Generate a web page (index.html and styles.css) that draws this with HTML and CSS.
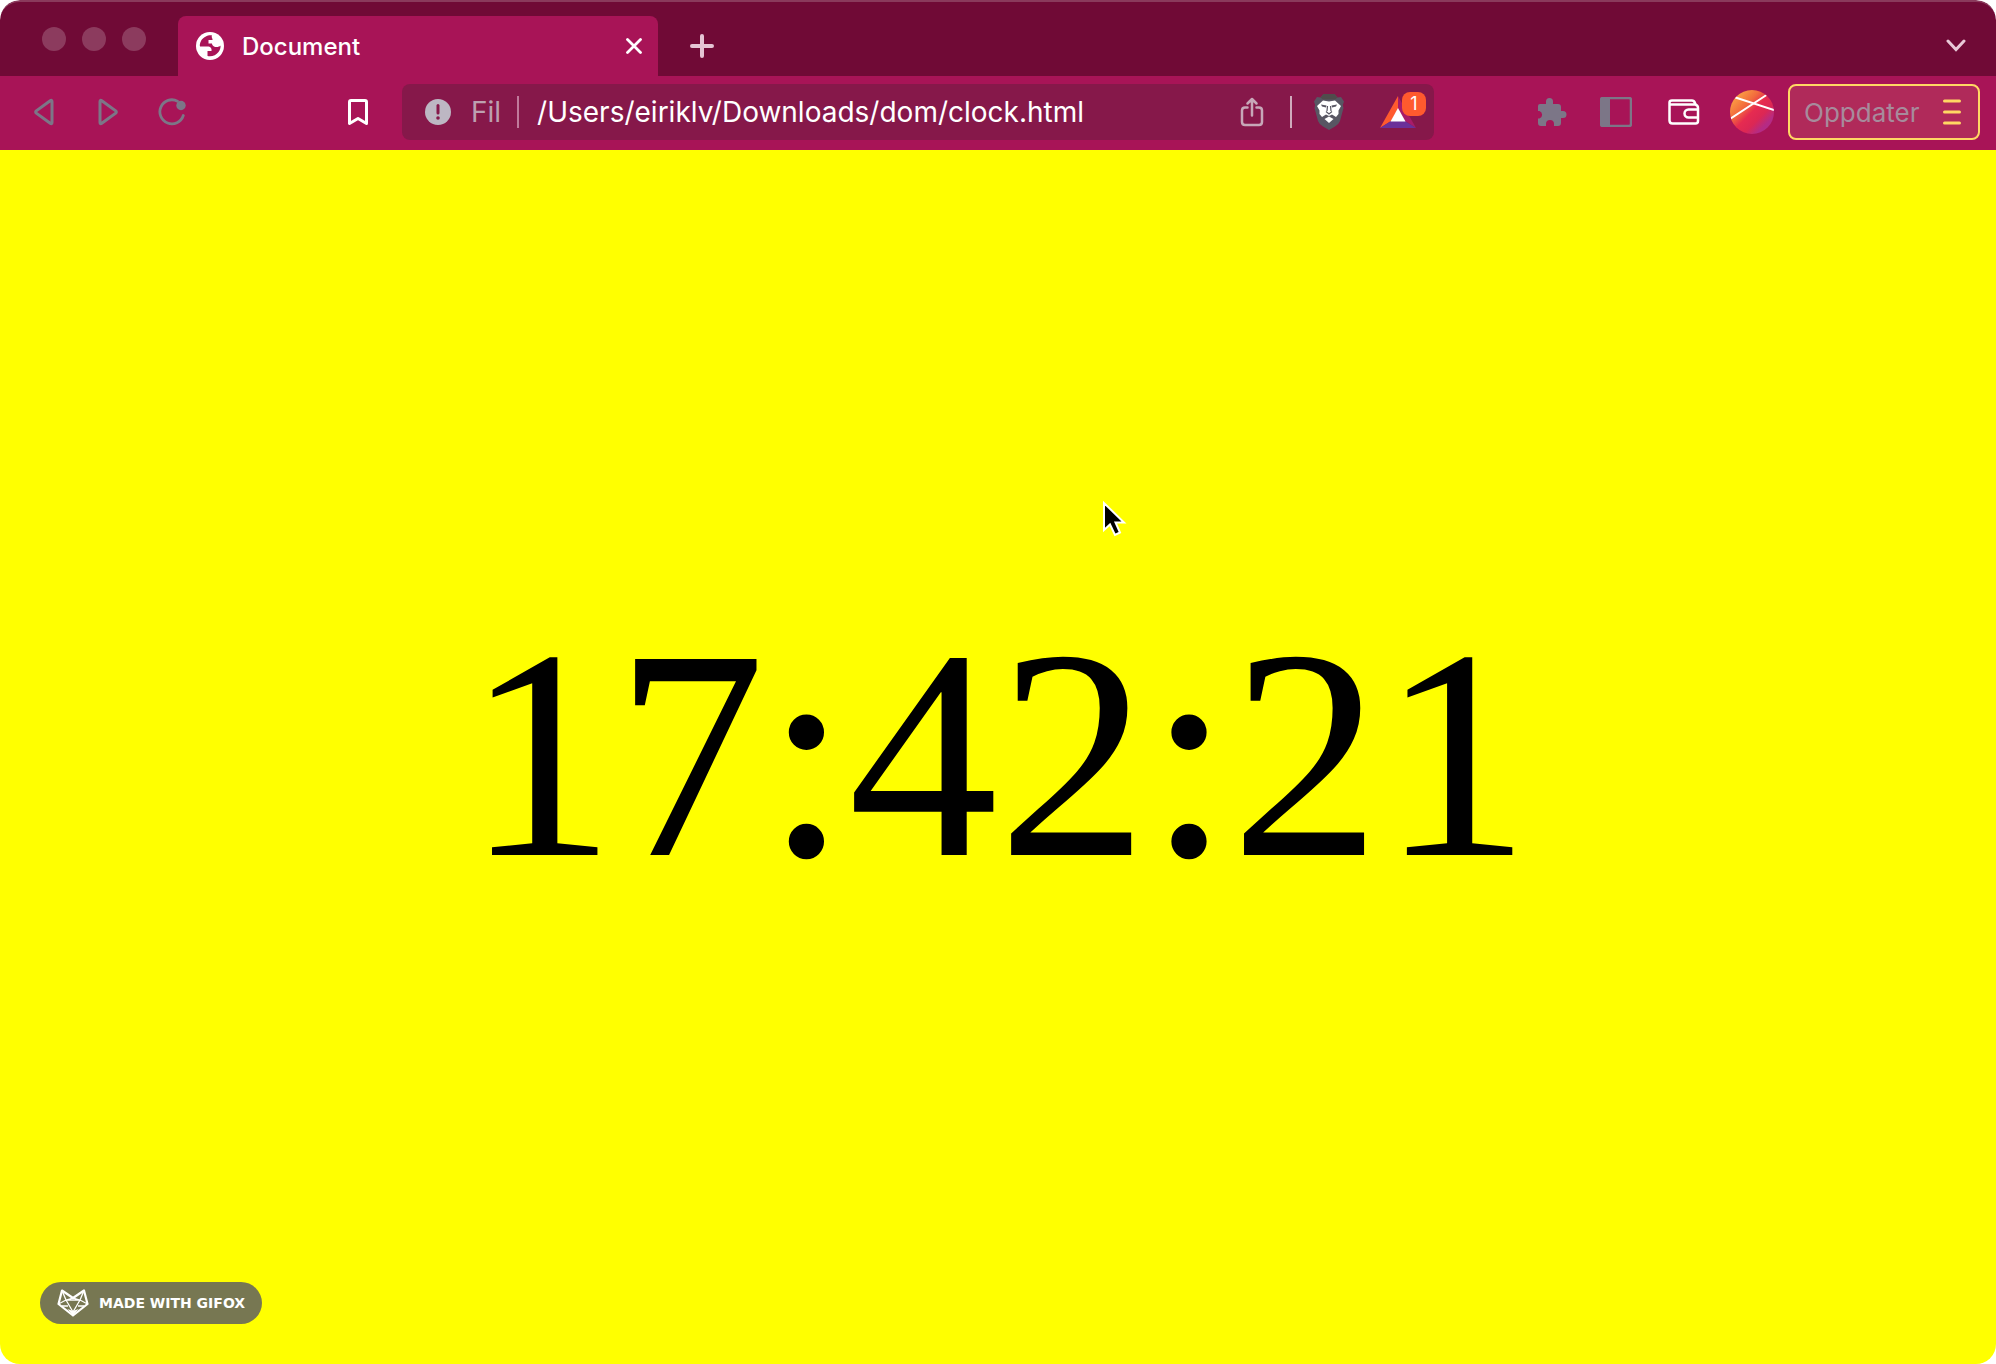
FILE: index.html
```html
<!DOCTYPE html>
<html lang="no">
<head>
<meta charset="utf-8">
<meta name="viewport" content="width=device-width, initial-scale=1">
<title>Document</title>
<link rel="stylesheet" href="styles.css">
</head>
<body>
<div class="window">
  <header class="titlebar">
    <div class="lights"><span class="light"></span><span class="light"></span><span class="light"></span></div>
    <div class="tab">
      <svg class="favicon" width="28" height="28" viewBox="0 0 28 28" aria-hidden="true">
        <circle cx="14" cy="14" r="14" fill="#fff"/>
        <path d="M16 3.500C13 2.800 7.500 4.500 5 9C4 11 3.500 13 4 14.500H11.500C14.500 14.500 16 16.500 15.500 19H11.500V24C15.500 25 20 23.500 22.500 20C24 18 24.800 15.500 24.500 13.500C23.500 15 20 15.500 18 14.500C16.500 13.500 16 12.500 16 11.500H12.500V8H16.500C17 6.500 15 5.500 16 3.500Z" fill="#a81457"/>
      </svg>
      <span class="tab-title">Document</span>
      <button class="tab-close" aria-label="Lukk fane">
        <svg width="16" height="16" viewBox="0 0 16 16"><path d="M1.500 1.500L14.500 14.500M14.500 1.500L1.500 14.500" stroke="#fff" stroke-width="2.800" stroke-linecap="round"/></svg>
      </button>
    </div>
    <button class="new-tab" aria-label="Ny fane">
      <svg width="24" height="24" viewBox="0 0 24 24"><path d="M12 2V22M2 12H22" stroke="#e5c5d4" stroke-width="4" stroke-linecap="round"/></svg>
    </button>
    <button class="tab-list" aria-label="Faneliste">
      <svg width="20" height="14" viewBox="0 0 20 14"><path d="M2 2L10 10.500L18 2" fill="none" stroke="#e8c8d7" stroke-width="3" stroke-linecap="round"/></svg>
    </button>
  </header>

  <nav class="toolbar">
    <button class="tool" aria-label="Tilbake">
      <svg width="20" height="28" viewBox="0 0 20 28"><path d="M18 3.500V24.500Q18 26.500 16.200 25.200L2.300 15.200Q1 14 2.300 12.800L16.200 2.800Q18 1.500 18 3.500Z" fill="none" stroke="#7c7687" stroke-width="3"/></svg>
    </button>
    <button class="tool" aria-label="Frem">
      <svg width="20" height="28" viewBox="0 0 20 28"><path d="M2 3.500V24.500Q2 26.500 3.800 25.200L17.700 15.200Q19 14 17.700 12.800L3.800 2.800Q2 1.500 2 3.500Z" fill="none" stroke="#7c7687" stroke-width="3"/></svg>
    </button>
    <button class="tool" aria-label="Last inn på nytt">
      <svg width="28" height="28" viewBox="0 0 28 28"><path d="M19.500 3.200A12 12 0 1 0 25.300 17.500" fill="none" stroke="#7c7687" stroke-width="2.800" stroke-linecap="round"/><circle cx="23" cy="7.500" r="4.700" fill="#7c7687"/></svg>
    </button>
    <button class="tool bookmark" aria-label="Bokmerke">
      <svg width="22" height="28" viewBox="0 0 22 28"><path d="M4 2.500H18Q19.500 2.500 19.500 4V25.500L11 20.500L2.500 25.500V4Q2.500 2.500 4 2.500Z" fill="none" stroke="#fff" stroke-width="3" stroke-linejoin="round"/></svg>
    </button>

    <div class="address">
      <svg width="26" height="26" viewBox="0 0 26 26" aria-hidden="true"><circle cx="13" cy="13" r="13" fill="#bdb7c3"/><path d="M13 6.500V14" stroke="#86184a" stroke-width="3" stroke-linecap="round"/><circle cx="13" cy="19" r="1.800" fill="#86184a"/></svg>
      <label class="scheme" for="url">Fil</label>
      <span class="rule"></span>
      <input class="url" id="url" type="text" value="/Users/eiriklv/Downloads/dom/clock.html" spellcheck="false">
      <button class="share" aria-label="Del">
        <svg width="24" height="30" viewBox="0 0 24 30"><path d="M7.500 10.500H5Q2 10.500 2 13.500V25Q2 28 5 28H19Q22 28 22 25V13.500Q22 10.500 19 10.500H16.500M12 18.500V2M7.500 6.500L12 2L16.500 6.500" fill="none" stroke="#c7a7b8" stroke-width="2.500" stroke-linecap="round" stroke-linejoin="round"/></svg>
      </button>
      <span class="rule light-rule"></span>
      <button class="shield" aria-label="Brave Shields">
        <svg width="30" height="36" viewBox="0 0 30 36">
          <path d="M9.500 0H20.500L23.500 3.500L27 3L30 7.500L28.800 11L29.500 14L26 27Q25 30 21 32.500L15 36L9 32.500Q5 30 4 27L.5 14L1.200 11L0 7.500L3 3L6.500 3.500Z" fill="#585663"/>
          <path d="M9.500 0H20.500L23.500 3.500L21 5.500H9L6.500 3.500Z" fill="#504c4c"/>
          <path d="M9 6.500L15 7.500L21 6.500L27 12L24.500 16.500L24.500 20L22 23L18 20.500L15 22L12 20.500L8 23L5.500 20L5.500 16.500L3 12Z" fill="#fff"/>
          <path d="M15 22.500L19.500 25L15 29L10.500 25Z" fill="#fff"/>
          <path d="M7 10.500L12.500 11.500L12 13.500L8 12.500ZM23 10.500L17.500 11.500L18 13.500L22 12.500Z" fill="#585663"/>
          <path d="M13.500 12L13 17M17 17L16.500 12M12 17.500L15 20L18 17.500" fill="none" stroke="#585663" stroke-width="1.200"/>
        </svg>
      </button>
      <button class="rewards" aria-label="Brave Rewards">
        <svg width="36" height="32" viewBox="0 0 36 32"><path d="M18 0L0 32L11 25L18 13Z" fill="#ff5a2e"/><path d="M18 0L36 32L25 25L18 13Z" fill="#a81c68"/><path d="M0 32L11 25H25L36 32Z" fill="#6b3099"/><path d="M18 12L25.500 25.500H10.500Z" fill="#fff"/></svg>
        <span class="count">1</span>
      </button>
    </div>

    <div class="extensions">
      <button class="tool" aria-label="Utvidelser">
        <svg width="30" height="30" viewBox="0 0 30 30"><path d="M3 7H9V4.500A3.500 3.500 0 0 1 16 4.500V7H21Q24 7 24 10V14H26A3.500 3.500 0 0 1 26 21H24V26Q24 29 21 29H17V27A4 4 0 0 0 9 27V29H4Q1 29 1 26V21.500H2.500A4 4 0 0 0 2.500 14H1V9Q1 7 3 7Z" fill="#7c7687"/></svg>
      </button>
      <button class="tool" aria-label="Sidepanel">
        <svg width="32" height="30" viewBox="0 0 32 30"><rect x="1" y="1" width="30" height="28" rx="2" fill="none" stroke="#7c7687" stroke-width="2.500"/><path d="M1 1H10V29H1Z" fill="#7c7687"/></svg>
      </button>
      <button class="tool wallet" aria-label="Lommebok">
        <svg width="32" height="26" viewBox="0 0 32 26"><path d="M30 17V22Q30 24.500 27.500 24.500H4.500Q1.500 24.500 1.500 21.500V3.500Q1.500 1.500 4 1.500H24Q26 1.500 27 4L28 6Q30 6.500 30 9V11M2 5.500H28M30 10.500V18.500H20.500A4 4 0 0 1 20.500 10.500Z" fill="none" stroke="#fff" stroke-width="2.500" stroke-linejoin="round"/></svg>
      </button>
      <button class="tool profile" aria-label="Profil">
        <svg width="44" height="44" viewBox="0 0 44 44">
          <defs>
            <linearGradient id="sunset" x1="0" y1="0" x2="1" y2="1"><stop offset=".15" stop-color="#fa9b42"/><stop offset=".35" stop-color="#f26a3d"/><stop offset=".5" stop-color="#e62b50"/><stop offset=".65" stop-color="#dc2754"/><stop offset=".8" stop-color="#b42b85"/></linearGradient>
            <clipPath id="disc"><circle cx="22" cy="22" r="22"/></clipPath>
          </defs>
          <g clip-path="url(#disc)"><path d="M0 0H44V44H0Z" fill="url(#sunset)"/><path d="M0 29L38 4M4 7L44 20" stroke="#fff" stroke-width="2"/></g>
        </svg>
      </button>
      <button class="update">Oppdater
        <svg width="18" height="26" viewBox="0 0 18 26"><path d="M1.500 2H16.500M1.500 13H16.500M1.500 24H16.500" stroke="#ffd863" stroke-width="3" stroke-linecap="round"/></svg>
      </button>
    </div>
  </nav>

  <main class="page">
    <time class="clock">17:42:21</time>
    <svg class="pointer" width="26" height="38" viewBox="0 0 26 38" aria-hidden="true"><path d="M2 3V30L8 24.500L13 35L18 32.500L13.500 22.500H22Z" fill="#000" stroke="#fff" stroke-width="2"/></svg>
    <a class="badge" href="#">
      <svg width="32" height="28" viewBox="0 0 32 28" aria-hidden="true"><path d="M5 1.500L16 9L27 1.500L30.500 15L16 26.500L1.500 15Z" fill="none" stroke="#fff" stroke-width="2.200" stroke-linejoin="round"/><path d="M5 1.500L9 11H23L27 1.500M1.500 15L9 11L16 23L23 11L30.500 15M9 11L16 9L23 11M5 17L11 17M27 17H21" fill="none" stroke="#fff" stroke-width="1.300" stroke-linejoin="round"/><path d="M10.500 20L16 22L21.500 20L16 26.500Z" fill="#fff"/></svg>
      <span>MADE WITH GIFOX</span>
    </a>
  </main>
</div>
</body>
</html>
```
FILE: styles.css
```css
* {
  box-sizing: border-box;
}

body {
  margin: 0;
  background: #fff;
  font-family: Inter, "Liberation Sans", sans-serif;
}

button {
  display: flex;
  align-items: center;
  justify-content: center;
  padding: 0;
  border: 0;
  background: none;
  font: inherit;
  flex: none;
}

svg {
  display: block;
  flex: none;
}

.window {
  display: flex;
  flex-direction: column;
  min-height: 100vh;
  border-radius: 20px;
  overflow: hidden;
}

.titlebar {
  display: flex;
  align-items: center;
  height: 76px;
  padding: 0 30px 0 42px;
  border-top: 2px solid #8a3a5c;
  border-radius: 20px 20px 0 0;
  background: #700a36;
}

.lights {
  display: flex;
  gap: 16px;
}

.light {
  width: 24px;
  height: 24px;
  border-radius: 50%;
  background: #8c3b5e;
}

.tab {
  display: flex;
  align-items: center;
  align-self: flex-end;
  width: 480px;
  height: 60px;
  margin-left: 32px;
  padding: 0 16px 0 18px;
  border-radius: 8px 8px 0 0;
  background: #a81457;
}

.tab-title {
  flex: 1;
  margin-left: 18px;
  color: #fff;
  font-size: 24px;
  font-weight: 500;
}

.new-tab {
  align-self: flex-end;
  width: 60px;
  height: 60px;
  margin-left: 14px;
}

.tab-list {
  align-self: flex-end;
  width: 20px;
  height: 60px;
  margin-left: auto;
}

.toolbar {
  display: flex;
  align-items: center;
  height: 74px;
  padding: 0 16px 2px 12px;
  background: #a81457;
}

.tool {
  width: 64px;
  height: 56px;
}

.bookmark {
  margin-left: 122px;
}

.address {
  display: flex;
  align-items: center;
  flex: 1;
  min-width: 0;
  height: 56px;
  margin: 0 86px 0 12px;
  padding: 0 18px 0 23px;
  border-radius: 8px;
  background: #86184a;
}

.scheme {
  margin-left: 20px;
  color: #bda0b1;
  font-size: 28px;
}

.rule {
  width: 2px;
  height: 32px;
  margin: 0 18px 0 16px;
  background: #c07a9b;
}

.light-rule {
  margin: 0 22px 0 26px;
  background: #cfabbc;
}

.url {
  flex: 1;
  min-width: 0;
  padding: 0;
  border: 0;
  outline: 0;
  background: none;
  color: #fff;
  font: inherit;
  font-size: 28px;
}

.rewards {
  position: relative;
  margin-left: 36px;
}

.count {
  position: absolute;
  top: -4px;
  right: -10px;
  width: 24px;
  height: 24px;
  border-radius: 8px;
  background: #ff5a2e;
  color: #fff;
  font-size: 18px;
  line-height: 24px;
  text-align: center;
}

.extensions {
  display: flex;
  align-items: center;
}

.wallet,
.profile,
.update {
  margin-left: 4px;
}

.update {
  justify-content: space-between;
  width: 192px;
  height: 56px;
  padding: 0 17px 0 14px;
  border: 2px solid #ffd863;
  border-radius: 8px;
  background: #b02a5a;
  color: #a78b9c;
  font-size: 26px;
}

.page {
  position: relative;
  display: flex;
  flex: 1;
  align-items: center;
  justify-content: center;
  padding-bottom: 6px;
  background: #ff0;
}

.clock {
  color: #000;
  font-family: "Liberation Serif", serif;
  font-size: 15vw;
}

.pointer {
  position: absolute;
  top: 350px;
  left: 1102px;
}

.badge {
  position: absolute;
  bottom: 40px;
  left: 40px;
  display: flex;
  align-items: center;
  gap: 10px;
  height: 42px;
  padding: 0 17px;
  border-radius: 21px;
  background: #777752;
  color: #fff;
  font-family: "DejaVu Sans", sans-serif;
  font-size: 14px;
  font-weight: 700;
  text-decoration: none;
}
```
